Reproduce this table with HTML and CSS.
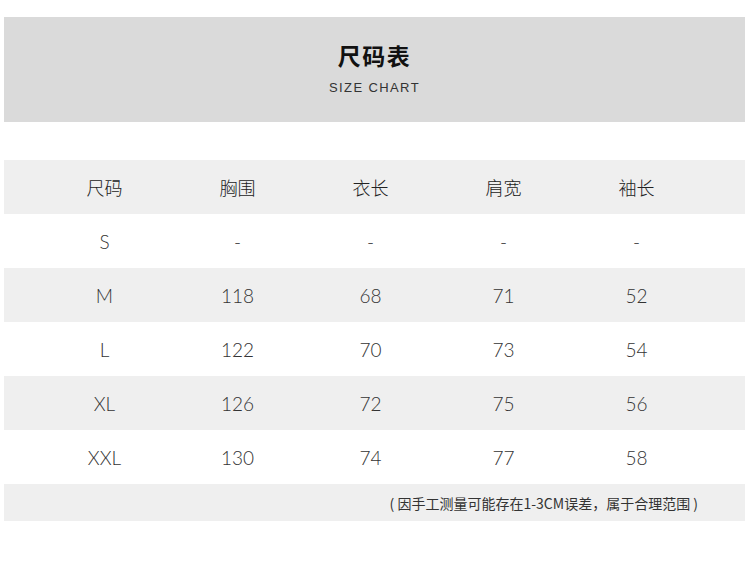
FILE: index.html
```html
<!DOCTYPE html>
<html lang="zh">
<head>
<meta charset="utf-8">
<link rel="stylesheet" href="styles.css">
</head>
<body>
<div class="page">
  <header class="banner">
    <h1 class="title">尺码表</h1>
    <p class="subtitle">SIZE CHART</p>
  </header>
  <section class="chart">
    <div class="row head">
      <span>尺码</span><span>胸围</span><span>衣长</span><span>肩宽</span><span>袖长</span>
    </div>
    <div class="row">
      <span>S</span><span>-</span><span>-</span><span>-</span><span>-</span>
    </div>
    <div class="row alt">
      <span>M</span><span>118</span><span>68</span><span>71</span><span>52</span>
    </div>
    <div class="row">
      <span>L</span><span>122</span><span>70</span><span>73</span><span>54</span>
    </div>
    <div class="row alt">
      <span>XL</span><span>126</span><span>72</span><span>75</span><span>56</span>
    </div>
    <div class="row">
      <span>XXL</span><span>130</span><span>74</span><span>77</span><span>58</span>
    </div>
    <div class="note">( 因手工测量可能存在1-3CM误差，属于合理范围 )</div>
  </section>
</div>
</body>
</html>
```
FILE: styles.css
```css
html, body {
  margin: 0;
  padding: 0;
  background: #ffffff;
}
.page {
  width: 750px;
  height: 575px;
  padding: 17px 5px 0 4px;
  box-sizing: border-box;
  font-family: "Noto Sans CJK SC", "Noto Sans", sans-serif;
}
.banner {
  height: 105px;
  background: #dadada;
  display: flex;
  flex-direction: column;
  align-items: center;
  box-sizing: border-box;
  padding-top: 22px;
}
.title {
  margin: 0;
  font-size: 23px;
  line-height: 32px;
  font-weight: 700;
  color: #111;
  letter-spacing: 1.5px;
}
.subtitle {
  margin: 9px 0 0 0;
  font-family: "Liberation Sans", Arial, sans-serif;
  font-size: 13px;
  line-height: 16px;
  letter-spacing: 1.4px;
  color: #333;
}
.chart {
  margin-top: 38px;
}
.row {
  display: grid;
  grid-template-columns: repeat(5, 133px);
  padding-left: 34px;
  height: 54px;
  align-items: center;
  font-family: "Lato", "Noto Sans CJK SC", sans-serif;
  font-weight: 300;
  font-size: 19px;
  color: #333;
}
.row span {
  text-align: center;
}
.row.head {
  background: #efefef;
  font-family: "Noto Sans CJK SC", sans-serif;
  font-weight: 300;
  font-size: 18px;
  color: #222;
}
.row.alt {
  background: #efefef;
}
.note {
  height: 37px;
  background: #efefef;
  display: flex;
  align-items: center;
  justify-content: flex-end;
  padding-right: 47px;
  font-family: "Noto Sans CJK SC", sans-serif;
  font-size: 14px;
  letter-spacing: 0;
  color: #333;
}
```
